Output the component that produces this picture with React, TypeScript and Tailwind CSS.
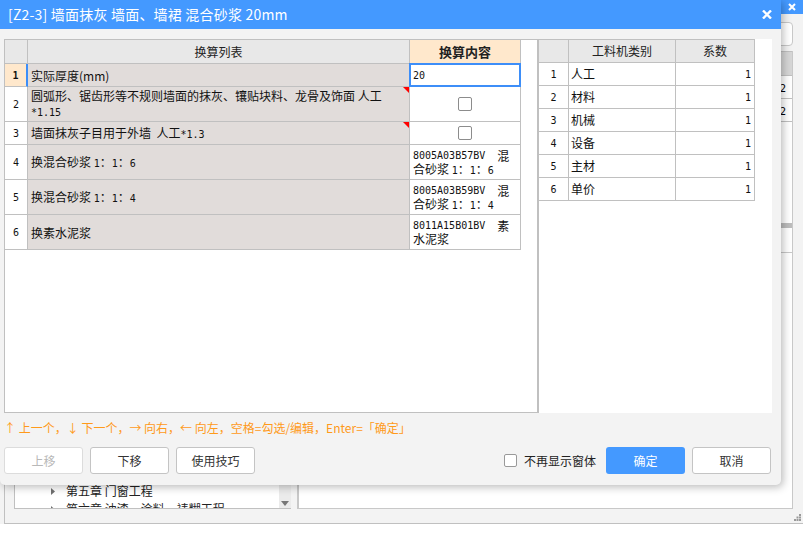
import React from 'react';

const CELL = 'border-[#c0c0c0]';

function Mono({ children, bold }: { children: React.ReactNode; bold?: boolean }) {
  return (
    <span className={`font-['DejaVu_Sans_Mono',monospace] text-[10px] ${bold ? 'font-bold' : ''}`}>
      {children}
    </span>
  );
}

function Check() {
  return <div className="w-[14px] h-[14px] rounded-[2px] border border-[#8c8c8c] bg-white" />;
}

function Flag() {
  return (
    <div className="absolute top-0 right-0 w-0 h-0 border-l-[6px] border-l-transparent border-t-[6px] border-t-[#ff0000]" />
  );
}

type Row = {
  no: number;
  h: string;
  text: React.ReactNode;
  kind: 'input' | 'check' | 'text';
  value?: React.ReactNode;
  flag?: boolean;
};

const ratio = (c: string) => (
  <>
    <Mono>1</Mono>：<Mono>1</Mono>：<Mono>{c}</Mono>
  </>
);

const rows: Row[] = [
  { no: 1, h: 'h-[23px]', kind: 'input', text: <>实际厚度(mm)</> },
  {
    no: 2,
    h: 'h-[35px]',
    kind: 'check',
    flag: true,
    text: (
      <>
        圆弧形、锯齿形等不规则墙面的抹灰、镶贴块料、龙骨及饰面 人工
        <br />
        <Mono>*1.15</Mono>
      </>
    ),
  },
  {
    no: 3,
    h: 'h-[23px]',
    kind: 'check',
    flag: true,
    text: (
      <>
        墙面抹灰子目用于外墙&nbsp; 人工<Mono>*1.3</Mono>
      </>
    ),
  },
  {
    no: 4,
    h: 'h-[35px]',
    kind: 'text',
    text: <>换混合砂浆 {ratio('6')}</>,
    value: (
      <>
        <div className="flex">
          <Mono>8005A03B57BV</Mono>
          <span className="ml-[12px]">混</span>
        </div>
        <div>合砂浆 {ratio('6')}</div>
      </>
    ),
  },
  {
    no: 5,
    h: 'h-[35px]',
    kind: 'text',
    text: <>换混合砂浆 {ratio('4')}</>,
    value: (
      <>
        <div className="flex">
          <Mono>8005A03B59BV</Mono>
          <span className="ml-[12px]">混</span>
        </div>
        <div>合砂浆 {ratio('4')}</div>
      </>
    ),
  },
  {
    no: 6,
    h: 'h-[35px]',
    kind: 'text',
    text: <>换素水泥浆</>,
    value: (
      <>
        <div className="flex">
          <Mono>8011A15B01BV</Mono>
          <span className="ml-[12px]">素</span>
        </div>
        <div>水泥浆</div>
      </>
    ),
  },
];

const kinds = ['人工', '材料', '机械', '设备', '主材', '单价'];

// only the tail of the chapter tree peeks out below the dialog
const chapters = ['第五章 门窗工程', '第六章 油漆、涂料、裱糊工程'];

function Background() {
  return (
    <div className="flex flex-col">
      <div className="h-[14px] bg-[#4499ff] flex justify-end items-center pr-[7px]">
        <svg width="8" height="8" viewBox="0 0 8 8">
          <path d="M1 1L7 7M7 1L1 7" stroke="#fff" strokeWidth="2" />
        </svg>
      </div>
      <div className="h-[510px] bg-[#f3f3f3] flex flex-col">
        <div className="h-[37px] flex justify-end items-start pt-[8px] pr-[10px]">
          <div className="w-[320px] h-[24px] bg-white border border-[#c8c8c8] rounded-[4px]" />
        </div>
        <div className="relative h-[473px] ml-[4px] border-l border-b border-[#c0c0c0] flex pl-[9px] pr-[10px] pb-[14px] gap-[6px]">
          <div className="w-[277px] bg-white border-l border-b border-[#c0c0c0] flex overflow-hidden">
            <div className="flex-1 pt-[431px] text-[12px] text-[#222]">
              {chapters.map((c) => (
                <div key={c} className="h-[18px] flex items-center pl-[36px] whitespace-nowrap">
                  <svg width="4" height="7" viewBox="0 0 4 7">
                    <path d="M0 0L4 3.5L0 7Z" fill="#707070" />
                  </svg>
                  <span className="ml-[11px]">{c}</span>
                </div>
              ))}
            </div>
            <div className="w-[12px] bg-[#ebebeb] flex flex-col justify-end items-center pb-[2px]">
              <svg width="8" height="5" viewBox="0 0 8 5">
                <path d="M0 0H8L4 5Z" fill="#777" />
              </svg>
            </div>
          </div>
          <div className="flex-1 bg-white border-l-2 border-r border-b border-[#c8c8c8] flex flex-col">
            <div className="border-t border-[#c0c0c0]">
              <div className="h-[24px] bg-[#d6d6d6] border-b border-[#c0c0c0]" />
              {[0, 1].map((i) => (
                <div key={i} className="h-[23px] border-b border-[#c0c0c0] flex justify-end">
                  <div className="w-[14px] border-l border-[#c0c0c0] text-[12px] leading-[22px] pl-[1px]">
                    <Mono>2</Mono>
                  </div>
                </div>
              ))}
            </div>
            <div className="h-[101px]" />
            <div className="h-[5px] bg-[#bdbdbd]" />
            <div className="h-[25px] border-b border-[#c8c8c8]" />
          </div>
          <svg className="absolute right-[2px] bottom-[2px]" width="7" height="7" viewBox="0 0 7 7">
            <rect x="5" y="0" width="2" height="2" fill="#9a9a9a" />
            <rect x="2.5" y="2.5" width="2" height="2" fill="#9a9a9a" />
            <rect x="5" y="2.5" width="2" height="2" fill="#9a9a9a" />
            <rect x="0" y="5" width="2" height="2" fill="#9a9a9a" />
            <rect x="2.5" y="5" width="2" height="2" fill="#9a9a9a" />
            <rect x="5" y="5" width="2" height="2" fill="#9a9a9a" />
          </svg>
        </div>
      </div>
    </div>
  );
}

function LeftGrid() {
  return (
    <div className="grid grid-cols-[23px_382px_111px] border-t border-[#c0c0c0] text-[12px] text-[#111]">
      <div className={`h-[24px] bg-[#e8e8e8] border-r border-b ${CELL}`} />
      <div className={`h-[24px] bg-[#e8e8e8] border-r border-b ${CELL} flex items-center justify-center text-[#222]`}>
        换算列表
      </div>
      <div className={`h-[24px] bg-[#ffe8cc] border-r border-b ${CELL} flex items-center justify-center font-bold text-[13px] text-[#222]`}>
        换算内容
      </div>
      {rows.map((r) => (
        <React.Fragment key={r.no}>
          <div
            className={`${r.h} border-b ${CELL} flex items-center justify-center ${
              r.no === 1 ? 'bg-[#ffe8cc] border-r-2 border-r-[#3d8ef8]' : 'bg-white border-r'
            }`}
          >
            <Mono bold={r.no === 1}>{r.no}</Mono>
          </div>
          <div className={`relative ${r.h} bg-[#e1dcda] border-r border-b ${CELL} flex items-center px-[3px] whitespace-nowrap`}>
            <div className="leading-[15px]">{r.text}</div>
            {r.flag && <Flag />}
          </div>
          {r.kind === 'input' && (
            <div className={`relative ${r.h} bg-white border-r border-b ${CELL} flex items-center pl-[3px]`}>
              <Mono>20</Mono>
              <div className="absolute -top-px -left-px -right-px -bottom-px border-2 border-[#3d8ef8]" />
            </div>
          )}
          {r.kind === 'check' && (
            <div className={`${r.h} bg-white border-r border-b ${CELL} flex items-center justify-center`}>
              <Check />
            </div>
          )}
          {r.kind === 'text' && (
            <div className={`${r.h} bg-white border-r border-b ${CELL} pl-[3px] pt-[4px] leading-[13px] whitespace-nowrap`}>
              {r.value}
            </div>
          )}
        </React.Fragment>
      ))}
    </div>
  );
}

function RightGrid() {
  return (
    <div className="grid grid-cols-[30px_107px_79px] w-[216px] border-t border-[#c0c0c0] text-[12px] text-[#111]">
      <div className={`h-[23px] bg-[#e8e8e8] border-r border-b ${CELL}`} />
      <div className={`h-[23px] bg-[#e8e8e8] border-r border-b ${CELL} flex items-center justify-center text-[#222]`}>
        工料机类别
      </div>
      <div className={`h-[23px] bg-[#e8e8e8] border-r border-b ${CELL} flex items-center justify-center text-[#222]`}>
        系数
      </div>
      {kinds.map((k, i) => (
        <React.Fragment key={k}>
          <div className={`h-[23px] border-r border-b ${CELL} flex items-center justify-center`}>
            <Mono>{i + 1}</Mono>
          </div>
          <div className={`h-[23px] border-r border-b ${CELL} flex items-center pl-[2px]`}>{k}</div>
          <div className={`h-[23px] border-r border-b ${CELL} flex items-center justify-end pr-[3px]`}>
            <Mono>1</Mono>
          </div>
        </React.Fragment>
      ))}
    </div>
  );
}

function Btn({ children, disabled, primary }: { children: React.ReactNode; disabled?: boolean; primary?: boolean }) {
  return (
    <button
      className={`w-[79px] h-[27px] rounded-[3px] text-[12px] flex items-center justify-center ${
        primary
          ? 'bg-[#4499ff] text-white'
          : disabled
          ? 'bg-white border border-[#dcdcdc] text-[#b8b8b8]'
          : 'bg-white border border-[#c4c4c4] text-[#333]'
      }`}
    >
      {children}
    </button>
  );
}

function Dialog() {
  return (
    <div className="absolute left-0 top-0 w-[781px] h-[485px] bg-[#f3f3f3] rounded-b-[5px] shadow-[2px_2px_8px_rgba(0,0,0,0.28)] flex flex-col">
      <div className="h-[29px] bg-[#4499ff] flex items-center justify-between pl-[8px] pr-[9px] text-white text-[14px]">
        <span className="tracking-[0.2px]">[Z2-3] 墙面抹灰 墙面、墙裙 混合砂浆 20mm</span>
        <svg width="10" height="9" viewBox="0 0 10 9">
          <path d="M1 0.5L9 8.5M9 0.5L1 8.5" stroke="#fff" strokeWidth="2.4" />
        </svg>
      </div>
      <div className="flex-1 flex flex-col pl-[4px] pr-[9px] pt-[10px]">
        <div className="h-[374px] flex">
          <div className="w-[533px] bg-white border-l border-b border-[#c0c0c0]">
            <LeftGrid />
          </div>
          <div className="flex-1 bg-white border-l-2 border-[#c0c0c0]">
            <RightGrid />
          </div>
        </div>
        <div className="h-[30px] flex items-center text-[12px] text-[#ff9a1a] whitespace-nowrap">
          ↑ 上一个，↓ 下一个，→ 向右，← 向左，空格=勾选/编辑，Enter=「确定」
        </div>
        <div className="mt-[4px] flex items-center justify-between pr-[1px]">
          <div className="flex gap-[7px]">
            <Btn disabled>上移</Btn>
            <Btn>下移</Btn>
            <Btn>使用技巧</Btn>
          </div>
          <div className="flex items-center">
            <div className="w-[13px] h-[13px] rounded-[2px] border border-[#999] bg-white" />
            <span className="ml-[7px] text-[12px] text-[#222]">不再显示窗体</span>
            <div className="ml-[10px] flex gap-[7px]">
              <Btn primary>确定</Btn>
              <Btn>取消</Btn>
            </div>
          </div>
        </div>
      </div>
    </div>
  );
}

export default function App() {
  return (
    <div className="relative w-[803px] h-[533px] overflow-hidden bg-white font-['Noto_Sans_CJK_SC','Noto_Sans',sans-serif]">
      <Background />
      <Dialog />
    </div>
  );
}
